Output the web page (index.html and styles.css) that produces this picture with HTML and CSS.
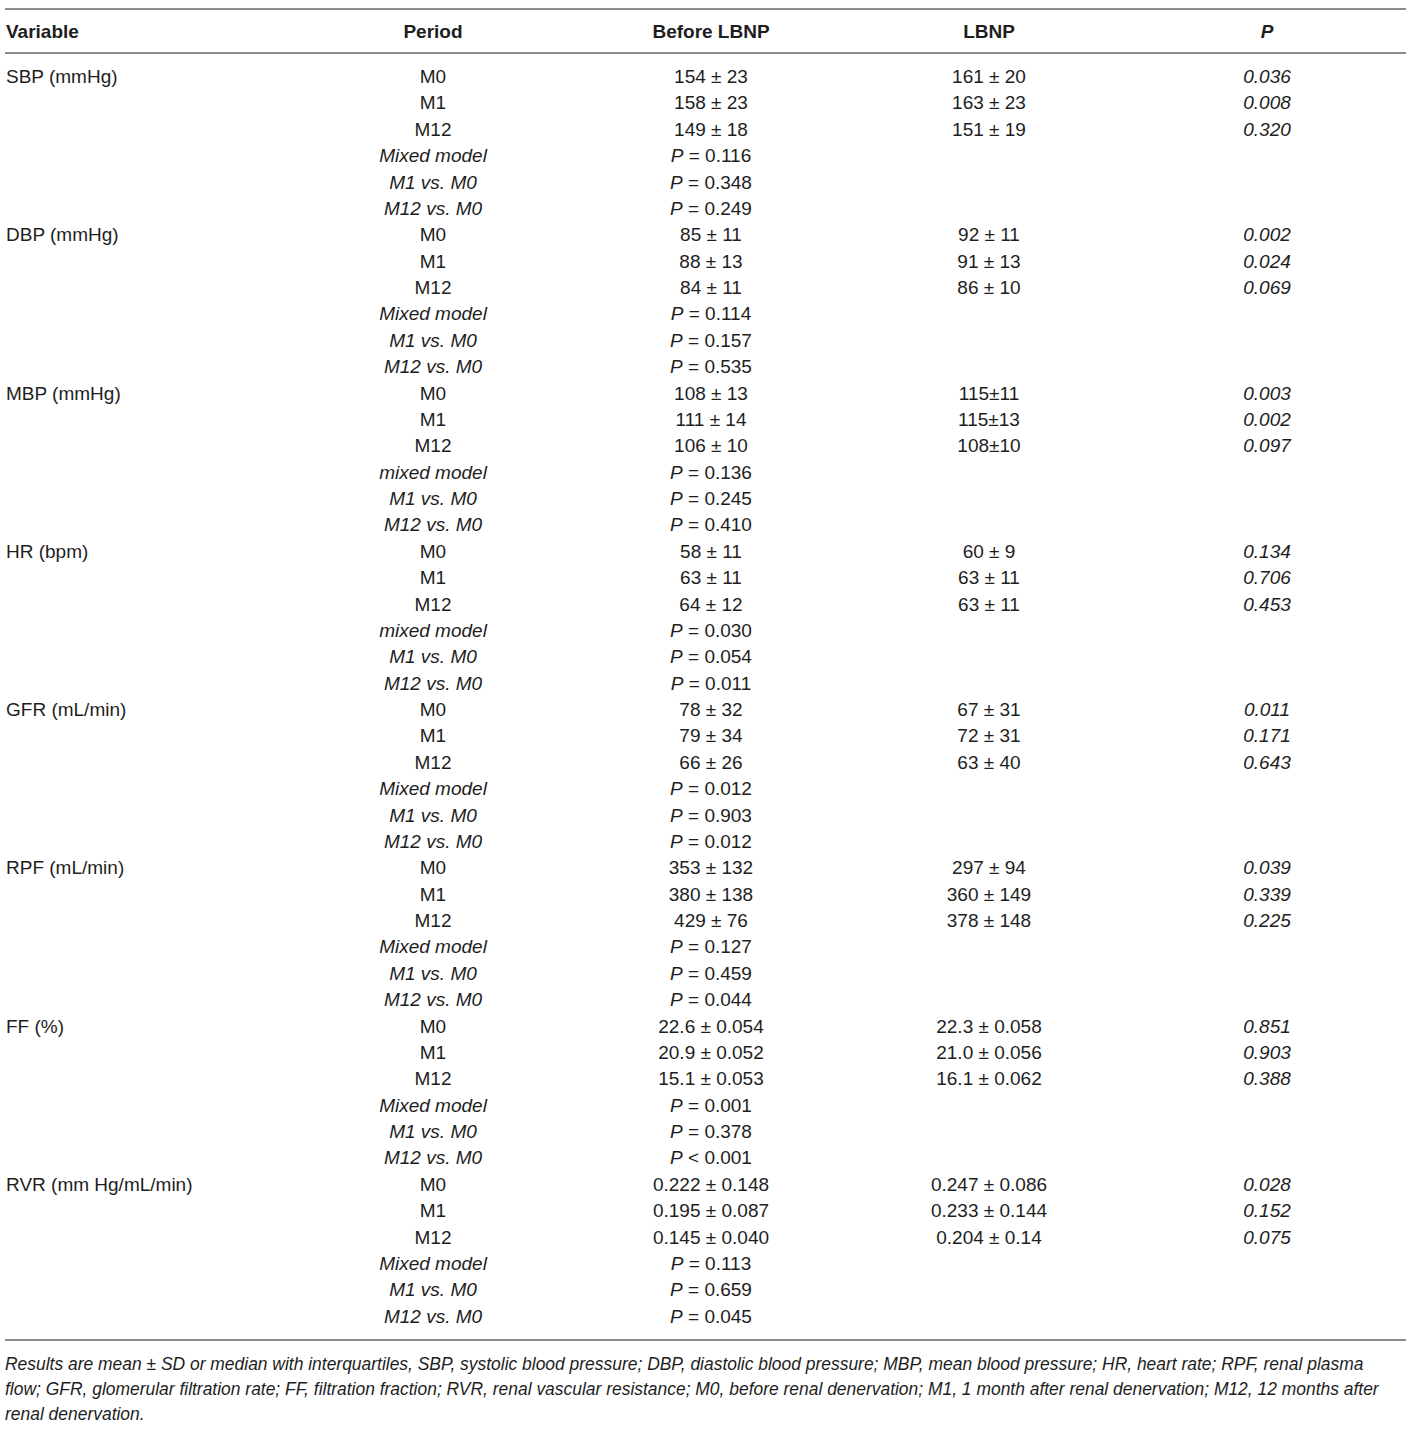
FILE: index.html
```html
<!DOCTYPE html>
<html>
<head>
<meta charset="utf-8">
<link rel="stylesheet" href="styles.css">
</head>
<body>
<div class="wrap">
<table class="data">
<colgroup><col class="c-var"><col class="c-n"><col class="c-n"><col class="c-n"><col class="c-n"></colgroup>
<thead>
<tr><th class="left">Variable</th><th>Period</th><th>Before LBNP</th><th>LBNP</th><th><i>P</i></th></tr>
</thead>
<tbody>
<tr class="first"><td class="left">SBP (mmHg)</td><td>M0</td><td>154 ± 23</td><td>161 ± 20</td><td><i>0.036</i></td></tr>
<tr><td></td><td>M1</td><td>158 ± 23</td><td>163 ± 23</td><td><i>0.008</i></td></tr>
<tr><td></td><td>M12</td><td>149 ± 18</td><td>151 ± 19</td><td><i>0.320</i></td></tr>
<tr><td></td><td><i>Mixed model</i></td><td><i>P</i> = 0.116</td><td></td><td></td></tr>
<tr><td></td><td><i>M1 vs. M0</i></td><td><i>P</i> = 0.348</td><td></td><td></td></tr>
<tr><td></td><td><i>M12 vs. M0</i></td><td><i>P</i> = 0.249</td><td></td><td></td></tr>

<tr><td class="left">DBP (mmHg)</td><td>M0</td><td>85 ± 11</td><td>92 ± 11</td><td><i>0.002</i></td></tr>
<tr><td></td><td>M1</td><td>88 ± 13</td><td>91 ± 13</td><td><i>0.024</i></td></tr>
<tr><td></td><td>M12</td><td>84 ± 11</td><td>86 ± 10</td><td><i>0.069</i></td></tr>
<tr><td></td><td><i>Mixed model</i></td><td><i>P</i> = 0.114</td><td></td><td></td></tr>
<tr><td></td><td><i>M1 vs. M0</i></td><td><i>P</i> = 0.157</td><td></td><td></td></tr>
<tr><td></td><td><i>M12 vs. M0</i></td><td><i>P</i> = 0.535</td><td></td><td></td></tr>

<tr><td class="left">MBP (mmHg)</td><td>M0</td><td>108 ± 13</td><td>115±11</td><td><i>0.003</i></td></tr>
<tr><td></td><td>M1</td><td>111 ± 14</td><td>115±13</td><td><i>0.002</i></td></tr>
<tr><td></td><td>M12</td><td>106 ± 10</td><td>108±10</td><td><i>0.097</i></td></tr>
<tr><td></td><td><i>mixed model</i></td><td><i>P</i> = 0.136</td><td></td><td></td></tr>
<tr><td></td><td><i>M1 vs. M0</i></td><td><i>P</i> = 0.245</td><td></td><td></td></tr>
<tr><td></td><td><i>M12 vs. M0</i></td><td><i>P</i> = 0.410</td><td></td><td></td></tr>

<tr><td class="left">HR (bpm)</td><td>M0</td><td>58 ± 11</td><td>60 ± 9</td><td><i>0.134</i></td></tr>
<tr><td></td><td>M1</td><td>63 ± 11</td><td>63 ± 11</td><td><i>0.706</i></td></tr>
<tr><td></td><td>M12</td><td>64 ± 12</td><td>63 ± 11</td><td><i>0.453</i></td></tr>
<tr><td></td><td><i>mixed model</i></td><td><i>P</i> = 0.030</td><td></td><td></td></tr>
<tr><td></td><td><i>M1 vs. M0</i></td><td><i>P</i> = 0.054</td><td></td><td></td></tr>
<tr><td></td><td><i>M12 vs. M0</i></td><td><i>P</i> = 0.011</td><td></td><td></td></tr>

<tr><td class="left">GFR (mL/min)</td><td>M0</td><td>78 ± 32</td><td>67 ± 31</td><td><i>0.011</i></td></tr>
<tr><td></td><td>M1</td><td>79 ± 34</td><td>72 ± 31</td><td><i>0.171</i></td></tr>
<tr><td></td><td>M12</td><td>66 ± 26</td><td>63 ± 40</td><td><i>0.643</i></td></tr>
<tr><td></td><td><i>Mixed model</i></td><td><i>P</i> = 0.012</td><td></td><td></td></tr>
<tr><td></td><td><i>M1 vs. M0</i></td><td><i>P</i> = 0.903</td><td></td><td></td></tr>
<tr><td></td><td><i>M12 vs. M0</i></td><td><i>P</i> = 0.012</td><td></td><td></td></tr>

<tr><td class="left">RPF (mL/min)</td><td>M0</td><td>353 ± 132</td><td>297 ± 94</td><td><i>0.039</i></td></tr>
<tr><td></td><td>M1</td><td>380 ± 138</td><td>360 ± 149</td><td><i>0.339</i></td></tr>
<tr><td></td><td>M12</td><td>429 ± 76</td><td>378 ± 148</td><td><i>0.225</i></td></tr>
<tr><td></td><td><i>Mixed model</i></td><td><i>P</i> = 0.127</td><td></td><td></td></tr>
<tr><td></td><td><i>M1 vs. M0</i></td><td><i>P</i> = 0.459</td><td></td><td></td></tr>
<tr><td></td><td><i>M12 vs. M0</i></td><td><i>P</i> = 0.044</td><td></td><td></td></tr>

<tr><td class="left">FF (%)</td><td>M0</td><td>22.6 ± 0.054</td><td>22.3 ± 0.058</td><td><i>0.851</i></td></tr>
<tr><td></td><td>M1</td><td>20.9 ± 0.052</td><td>21.0 ± 0.056</td><td><i>0.903</i></td></tr>
<tr><td></td><td>M12</td><td>15.1 ± 0.053</td><td>16.1 ± 0.062</td><td><i>0.388</i></td></tr>
<tr><td></td><td><i>Mixed model</i></td><td><i>P</i> = 0.001</td><td></td><td></td></tr>
<tr><td></td><td><i>M1 vs. M0</i></td><td><i>P</i> = 0.378</td><td></td><td></td></tr>
<tr><td></td><td><i>M12 vs. M0</i></td><td><i>P</i> &lt; 0.001</td><td></td><td></td></tr>

<tr><td class="left">RVR (mm Hg/mL/min)</td><td>M0</td><td>0.222 ± 0.148</td><td>0.247 ± 0.086</td><td><i>0.028</i></td></tr>
<tr><td></td><td>M1</td><td>0.195 ± 0.087</td><td>0.233 ± 0.144</td><td><i>0.152</i></td></tr>
<tr><td></td><td>M12</td><td>0.145 ± 0.040</td><td>0.204 ± 0.14</td><td><i>0.075</i></td></tr>
<tr><td></td><td><i>Mixed model</i></td><td><i>P</i> = 0.113</td><td></td><td></td></tr>
<tr><td></td><td><i>M1 vs. M0</i></td><td><i>P</i> = 0.659</td><td></td><td></td></tr>
<tr class="last"><td></td><td><i>M12 vs. M0</i></td><td><i>P</i> = 0.045</td><td></td><td></td></tr>
</tbody>
</table>
<p class="note">Results are mean ± SD or median with interquartiles, SBP, systolic blood pressure; DBP, diastolic blood pressure; MBP, mean blood pressure; HR, heart rate; RPF, renal plasma flow; GFR, glomerular filtration rate; FF, filtration fraction; RVR, renal vascular resistance; M0, before renal denervation; M1, 1 month after renal denervation; M12, 12 months after renal denervation.</p>
</div>
</body>
</html>
```

FILE: styles.css
```css
html, body {
  margin: 0;
  padding: 0;
  background: #ffffff;
}

body {
  font-family: "Liberation Sans", Arial, sans-serif;
  color: #1e1e1e;
}

.wrap {
  width: 1401px;
  margin: 8px 0 0 5px;
}

.data {
  width: 1401px;
  table-layout: fixed;
  border-collapse: collapse;
  font-size: 19px;
}

.c-var { width: 289px; }
.c-n { width: 278px; }

.data thead th {
  height: 41px;
  padding: 1px 0 0 0;
  font-weight: bold;
  text-align: center;
  vertical-align: middle;
  border-top: 2px solid #8c8c8c;
  border-bottom: 2px solid #8c8c8c;
}

.data td {
  padding: 0;
  height: 26.38px;
  line-height: 26.38px;
  text-align: center;
  white-space: nowrap;
}

.data .left {
  text-align: left;
  padding-left: 1px;
}

.data tbody tr.first td {
  padding-top: 10px;
}

.data tbody tr.last td {
  padding-bottom: 9px;
  border-bottom: 2px solid #8c8c8c;
}

.note {
  margin: 11px 0 0 0;
  padding-right: 14px;
  font-size: 17.45px;
  font-style: italic;
  line-height: 25px;
  color: #1e1e1e;
}
```
